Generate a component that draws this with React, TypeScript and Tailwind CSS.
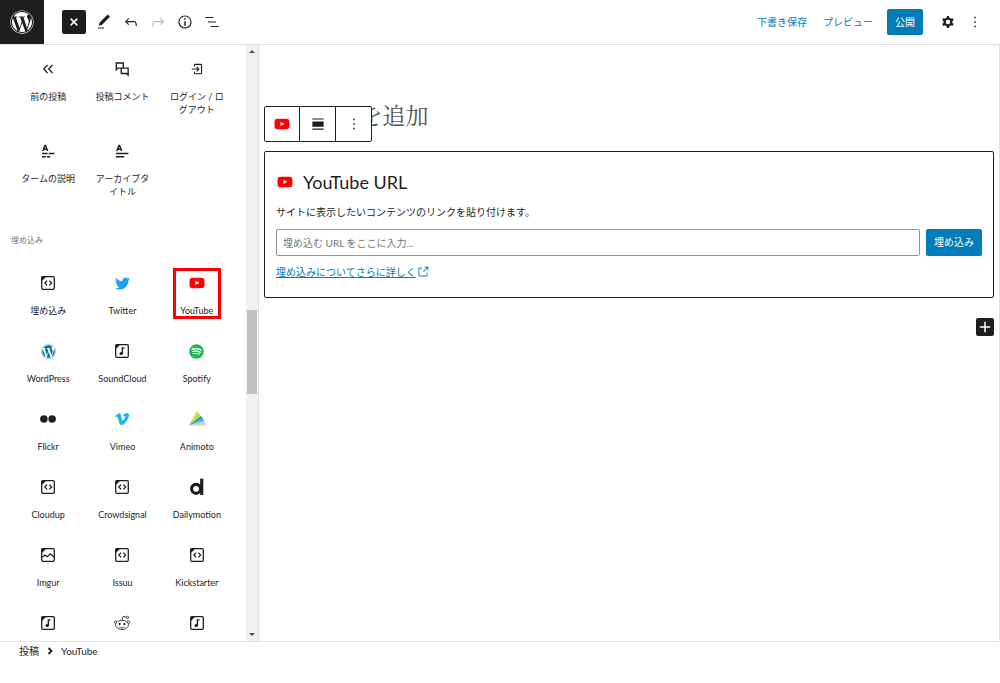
import { useState } from 'react'
import type { ReactNode } from 'react'
import { FaTwitter, FaSpotify, FaWordpress, FaVimeoV } from 'react-icons/fa'

type Block = { name?: string; icon: ReactNode; marked?: boolean }

function Icon({ d, className = 'size-[18px]' }: { d: string; className?: string }) {
  return (
    <svg viewBox="0 0 24 24" className={className} fill="currentColor" fillRule="evenodd" aria-hidden="true">
      <path d={d} />
    </svg>
  )
}

const paths = {
  edit: 'M20.1 5.1L16.9 2 6.2 12.7l-1.3 4.4 4.5-1.3L20.1 5.1zM4 20.8h8v-1.5H4v1.5z',
  undo: 'M18.3 11.7c-.6-.6-1.4-.9-2.3-.9H6.7l2.9-3.3-1.1-1-4.5 5L8.5 16l1-1-2.7-2.7H16c.5 0 .9.2 1.3.5 1 1 1 3.4 1 4.5v.3h1.5v-.2c0-1.5 0-4.3-1.5-5.7z',
  redo: 'M15.6 6.5l-1.1 1 2.9 3.3H8c-.9 0-1.7.3-2.3.9-1.4 1.5-1.4 4.2-1.4 5.6v.2h1.5v-.3c0-1.1 0-3.5 1-4.5.3-.3.7-.5 1.3-.5h9.2L14.5 15l1.1 1.1 4.6-4.6-4.6-5z',
  info: 'M12 3.2c-4.8 0-8.8 3.9-8.8 8.8 0 4.8 3.9 8.8 8.8 8.8 4.8 0 8.8-3.9 8.8-8.8 0-4.8-4-8.8-8.8-8.8zm0 16c-4 0-7.2-3.3-7.2-7.2C4.8 8 8 4.8 12 4.8s7.2 3.3 7.2 7.2c0 4-3.2 7.2-7.2 7.2zM11 17h2v-6h-2v6zm0-8h2V7h-2v2z',
  list: 'M13.8 5.2H3v1.5h10.8V5.2zm-3.6 12v1.5H21v-1.5H10.2zm7.2-6H6.6v1.5h10.8v-1.5z',
  cog: 'M10.289 4.836A1 1 0 0111.275 4h1.306a1 1 0 01.987.836l.244 1.466c.787.26 1.503.679 2.108 1.218l1.393-.522a1 1 0 011.216.437l.653 1.13a1 1 0 01-.23 1.273l-1.148.944a6.025 6.025 0 010 2.435l1.149.946a1 1 0 01.23 1.272l-.653 1.13a1 1 0 01-1.216.437l-1.394-.522c-.605.54-1.32.958-2.108 1.218l-.244 1.466a1 1 0 01-.987.836h-1.306a1 1 0 01-.986-.836l-.244-1.466a5.995 5.995 0 01-2.108-1.218l-1.394.522a1 1 0 01-1.217-.436l-.653-1.131a1 1 0 01.23-1.272l1.149-.946a6.026 6.026 0 010-2.435l-1.148-.944a1 1 0 01-.23-1.272l.653-1.131a1 1 0 011.217-.437l1.393.522a5.994 5.994 0 012.108-1.218l.244-1.466zM14.929 12a3 3 0 11-6 0 3 3 0 016 0z',
  more: 'M13 19h-2v-2h2v2zm0-6h-2v-2h2v2zm0-6h-2V5h2v2z',
  login: 'M11 14.5l1.1 1.1 3-3 .5-.5-.6-.6-3-3-1 1 1.7 1.7H5v1.5h7.7L11 14.5zM16.8 5h-7c-1.1 0-2 .9-2 2v1.5h1.5V7c0-.3.2-.5.5-.5h7c.3 0 .5.2.5.5v10c0 .3-.2.5-.5.5h-7c-.3 0-.5-.2-.5-.5v-1.5H7.8V17c0 1.1.9 2 2 2h7c1.1 0 2-.9 2-2V7c0-1.1-.9-2-2-2z',
  external: 'M18.2 17c0 .7-.6 1.2-1.2 1.2H7c-.7 0-1.2-.6-1.2-1.2V7c0-.7.6-1.2 1.2-1.2h3.2V4.2H7C5.5 4.2 4.2 5.5 4.2 7v10c0 1.5 1.2 2.8 2.8 2.8h10c1.5 0 2.8-1.2 2.8-2.8v-3.6h-1.5V17zM14.9 3v1.5h3.7l-6.4 6.4 1.1 1.1 6.4-6.4v3.7h1.5V3h-6.3z',
  youtube: 'M21.8 8s-.195-1.377-.795-1.984c-.76-.797-1.613-.8-2.004-.847-2.798-.203-6.996-.203-6.996-.203h-.01s-4.197 0-6.996.202c-.39.046-1.242.05-2.003.846C2.395 6.623 2.2 8 2.2 8S2 9.62 2 11.24v1.517c0 1.618.2 3.237.2 3.237s.195 1.378.795 1.985c.76.797 1.76.77 2.205.855 1.6.153 6.8.2 6.8.2s4.203-.005 7-.208c.392-.047 1.244-.05 2.005-.847.6-.607.795-1.985.795-1.985s.2-1.618.2-3.237v-1.517C22 9.62 21.8 8 21.8 8zM9.935 14.595v-5.62l5.403 2.82-5.403 2.8z',
}

const YouTubeIcon = () => <Icon d={paths.youtube} className="size-[18px] text-[#ff0000]" />

function Line({ d, width = 1.8 }: { d: string; width?: number }) {
  return (
    <svg viewBox="0 0 24 24" className="size-[18px]" fill="none" stroke="currentColor" strokeWidth={width} aria-hidden="true">
      <path d={d} />
    </svg>
  )
}

// Square frame with a dark folded corner, shared by the generic embed icons
function Frame({ children }: { children: ReactNode }) {
  return (
    <svg viewBox="0 0 24 24" className="size-[18px]" fill="none" stroke="currentColor" strokeWidth="1.7" aria-hidden="true">
      <rect x="3.6" y="3.6" width="16.8" height="16.8" rx="1.5" />
      <path d="M3.5 3.5h6l-6 6z" fill="currentColor" stroke="none" />
      {children}
    </svg>
  )
}

const EmbedIcon = () => <Frame><path d="M10.8 8.8 7.8 12l3 3.2M13.8 8.8l3 3.2-3 3.2" /></Frame>

const AudioIcon = () => (
  <Frame>
    <ellipse cx="10.9" cy="15.4" rx="2.3" ry="2" fill="currentColor" stroke="none" />
    <path d="M12.5 15.4V7.8h3" strokeWidth="1.9" />
  </Frame>
)

const PhotoIcon = () => <Frame><path d="m4 15 4-3 3 2.2 4.2-3.8 5 4.6" /></Frame>

const AnimotoIcon = () => (
  <svg viewBox="0 0 24 24" className="size-[18px]" aria-hidden="true">
    <path fill="#d4cdcb" d="M.5 20.5 22 15l1.6 4.4q.2 1.1-1 1.1z" />
    <path fill="#4bb8e0" d="M.5 20.5 19.6 11l2.4 3.6z" />
    <path fill="#209dbd" d="M.5 20.5 17 7.6l2.6 3.8z" />
    <path fill="#c3d82e" d="M.5 20.5 13.4 3l3.4 4.6z" />
    <path fill="#dbe87f" d="M.5 20.5 10.6 2.4q1.4-2 2.8.4z" />
  </svg>
)

const RedditIcon = () => (
  <svg viewBox="0 0 24 24" className="size-[18px]" fill="none" stroke="currentColor" strokeWidth="1.1" aria-hidden="true">
    <ellipse cx="12" cy="14.5" rx="8.6" ry="6.2" />
    <path d="M4 12.8c-4-.7-2.2-5.2 1.4-3M20 12.8c4-.7 2.2-5.2-1.4-3M12 8.3l1.4-5 4.6 1M8.4 17.2c2 1.8 5.2 1.8 7.2 0" />
    <circle cx="19.3" cy="4.6" r="1.6" />
    <circle cx="8.8" cy="13.4" r="1.5" fill="currentColor" stroke="none" />
    <circle cx="15.2" cy="13.4" r="1.5" fill="currentColor" stroke="none" />
  </svg>
)

const themeBlocks: Block[] = [
  { name: '前の投稿', icon: <Line d="m11.5 6.5-5 5.5 5 5.5M18 6.5 13 12l5 5.5" /> },
  { name: '投稿コメント', icon: <Line d="M11 10.8H6.5L4.4 13V4h9.4v6.5M11 10.8h9.2v9.4L18 18h-7z" /> },
  { name: 'ログイン / ログアウト', icon: <Icon d={paths.login} /> },
  { name: 'タームの説明', icon: <Line width={2} d="M5 12 8 4.5h.6L11.6 12M6 9.6h4.6M4 15.3h7.5M13 15.3h7.5M4 19.5h5M10.5 19.5h4.5" /> },
  { name: 'アーカイブタイトル', icon: <Line width={2} d="M5 12 8 4.5h.6L11.6 12M6 9.6h4.6M4 15.3h16.5M4 19.5h11" /> },
]

const embedBlocks: Block[] = [
  { name: '埋め込み', icon: <EmbedIcon /> },
  { name: 'Twitter', icon: <FaTwitter className="size-[15px] text-[#1da1f2]" /> },
  { name: 'YouTube', icon: <YouTubeIcon />, marked: true },
  { name: 'WordPress', icon: <FaWordpress className="size-[15px] text-[#0073aa]" /> },
  { name: 'SoundCloud', icon: <AudioIcon /> },
  { name: 'Spotify', icon: <FaSpotify className="size-[15px] text-[#1db954]" /> },
  {
    name: 'Flickr',
    icon: (
      <svg viewBox="0 0 24 24" className="size-[18px]" fill="currentColor" aria-hidden="true">
        <circle cx="6.5" cy="12" r="5" />
        <circle cx="17.5" cy="12" r="5" />
      </svg>
    ),
  },
  { name: 'Vimeo', icon: <FaVimeoV className="size-4 text-[#1ab7ea]" /> },
  { name: 'Animoto', icon: <AnimotoIcon /> },
  { name: 'Cloudup', icon: <EmbedIcon /> },
  { name: 'Crowdsignal', icon: <EmbedIcon /> },
  {
    name: 'Dailymotion',
    icon: (
      <svg viewBox="0 0 24 24" className="size-[18px]" fill="none" stroke="currentColor" strokeWidth="4.2" aria-hidden="true">
        <circle cx="10.8" cy="14.4" r="6" />
        <path d="M18.3.8v21.8" />
      </svg>
    ),
  },
  { name: 'Imgur', icon: <PhotoIcon /> },
  { name: 'Issuu', icon: <EmbedIcon /> },
  { name: 'Kickstarter', icon: <EmbedIcon /> },
  { icon: <AudioIcon /> },
  { icon: <RedditIcon /> },
  { icon: <AudioIcon /> },
]

function BlockItem({ block }: { block: Block }) {
  return (
    <button type="button" className="relative flex flex-col items-center gap-3 px-2 py-3">
      <span className="flex size-[18px] items-center justify-center">{block.icon}</span>
      {block.name && <span className="text-[9px] leading-[13px] break-all">{block.name}</span>}
      {block.marked && <span className="absolute inset-x-[13px] top-1.5 h-[51px] border-3 border-[#ff0000]" />}
    </button>
  )
}

function ToolButton({ label, d, disabled = false }: { label: string; d: string; disabled?: boolean }) {
  return (
    <button type="button" aria-label={label} disabled={disabled} className="disabled:text-[#bbb]">
      <Icon d={d} />
    </button>
  )
}

export default function App() {
  const [title, setTitle] = useState('')
  const [url, setUrl] = useState('')

  return (
    <div className="flex h-screen flex-col bg-white font-[Lato,'Noto_Sans_CJK_JP',sans-serif] text-[10px] text-[#1e1e1e]">
      <header className="flex h-[45px] shrink-0 items-center border-b border-[#e0e0e0]">
        <a href="#" aria-label="WordPress" className="flex size-11 items-center justify-center self-start bg-[#1e1e1e] text-white">
          <FaWordpress className="size-6" />
        </a>
        <div className="ml-[18px] flex items-center gap-[9px]">
          <button type="button" aria-label="閉じる" className="flex size-6 items-center justify-center rounded-xs bg-[#1e1e1e] text-white">
            <Line d="m7.5 7.5 9 9M16.5 7.5l-9 9" width={2} />
          </button>
          <ToolButton label="編集" d={paths.edit} />
          <ToolButton label="元に戻す" d={paths.undo} />
          <ToolButton label="やり直す" d={paths.redo} disabled />
          <ToolButton label="詳細" d={paths.info} />
          <ToolButton label="リスト表示" d={paths.list} />
        </div>
        <div className="ml-auto flex items-center pr-4">
          <button type="button" className="mr-4 text-[#007cba]">下書き保存</button>
          <button type="button" className="mr-3.5 text-[#007cba]">プレビュー</button>
          <button type="button" className="mr-4 h-[26px] rounded-xs bg-[#007cba] px-2 text-white">公開</button>
          <div className="flex gap-[9px]">
            <ToolButton label="設定" d={paths.cog} />
            <ToolButton label="オプション" d={paths.more} />
          </div>
        </div>
      </header>

      <div className="flex min-h-0 flex-1">
        {/* Block inserter */}
        <aside className="flex w-[259px] shrink-0 border-r border-[#e0e0e0]">
          <div className="flex-1 overflow-hidden pt-[3px] pr-3 pl-[11px]">
            <div className="grid grid-cols-3 items-start gap-y-0.5">
              {themeBlocks.map(b => <BlockItem key={b.name} block={b} />)}
            </div>
            <h2 className="mt-6 mb-[15px] text-[8px] leading-[13px] text-[#757575]">埋め込み</h2>
            <div className="grid grid-cols-3 items-start gap-y-px">
              {embedBlocks.map((b, i) => <BlockItem key={i} block={b} />)}
            </div>
          </div>
          <div className="flex w-3 flex-col items-center bg-[#f1f1f1] text-[#505050]">
            <svg viewBox="0 0 12 12" className="size-3" fill="currentColor"><path d="M3 8h6L6 5z" /></svg>
            <div className="flex-253" />
            <div className="w-2.5 flex-83 bg-[#c1c1c1]" />
            <div className="flex-235" />
            <svg viewBox="0 0 12 12" className="size-3" fill="currentColor"><path d="M3 4h6L6 7z" /></svg>
          </div>
        </aside>

        {/* Editor canvas */}
        <main className="min-w-0 flex-1 border-r border-[#e0e0e0] px-[5px] pt-14">
          <div className="relative mb-[18px]">
            <input
              aria-label="タイトル"
              placeholder="タイトルを追加"
              value={title}
              onChange={e => setTitle(e.target.value)}
              className="block h-8 w-full px-1 font-['Liberation_Serif','Noto_Serif_CJK_JP','Noto_Sans_CJK_JP',serif] text-[23px] outline-none placeholder:text-[#555]"
            />
            <div className="absolute top-[5px] left-0 flex h-9 divide-x divide-[#1e1e1e] rounded-xs border border-[#1e1e1e] bg-white">
              <button type="button" aria-label="YouTube" className="flex w-[35px] items-center justify-center"><YouTubeIcon /></button>
              <button type="button" aria-label="配置" className="flex w-9 items-center justify-center">
                <Icon d="M4.5 4.5h15V6h-15zM4.5 8.5h15v7h-15zM4.5 18h15v1.5h-15z" />
              </button>
              <button type="button" aria-label="オプション" className="flex w-[35px] items-center justify-center"><Icon d={paths.more} /></button>
            </div>
          </div>

          <section className="rounded-xs border border-[#1e1e1e] px-[11px] pt-[18px] pb-[17px]">
            <h3 className="flex items-center gap-[9px] text-[18px] leading-6">
              <YouTubeIcon />
              YouTube URL
            </h3>
            <p className="mt-2.5 leading-4">サイトに表示したいコンテンツのリンクを貼り付けます。</p>
            <form className="mt-[9px] flex gap-1.5" onSubmit={e => e.preventDefault()}>
              <input
                type="url"
                aria-label="YouTube URL"
                placeholder="埋め込む URL をここに入力..."
                value={url}
                onChange={e => setUrl(e.target.value)}
                className="h-[27px] min-w-0 flex-1 rounded-xs border border-[#949494] px-1.5 outline-none placeholder:text-[#757575]"
              />
              <button type="submit" className="h-[27px] rounded-xs bg-[#007cba] px-2 text-white">埋め込み</button>
            </form>
            <a href="#" className="mt-2 flex items-center leading-4 text-[#007cba]">
              <span className="underline">埋め込みについてさらに詳しく</span>
              <Icon d={paths.external} className="size-3.5" />
            </a>
          </section>

          <button type="button" aria-label="ブロックを追加" className="mt-5 ml-auto flex size-[18px] items-center justify-center rounded-xs bg-[#1e1e1e] text-white">
            <Line d="M12 5v14M5 12h14" width={2} />
          </button>
        </main>
      </div>

      <footer className="h-[42px] shrink-0 border-t border-[#e0e0e0]">
        <nav className="flex items-center gap-0.5 pl-[19px] leading-4">
          <a href="#">投稿</a>
          <Line d="m10 8 4 4-4 4" width={2.4} />
          <a href="#">YouTube</a>
        </nav>
      </footer>
    </div>
  )
}
